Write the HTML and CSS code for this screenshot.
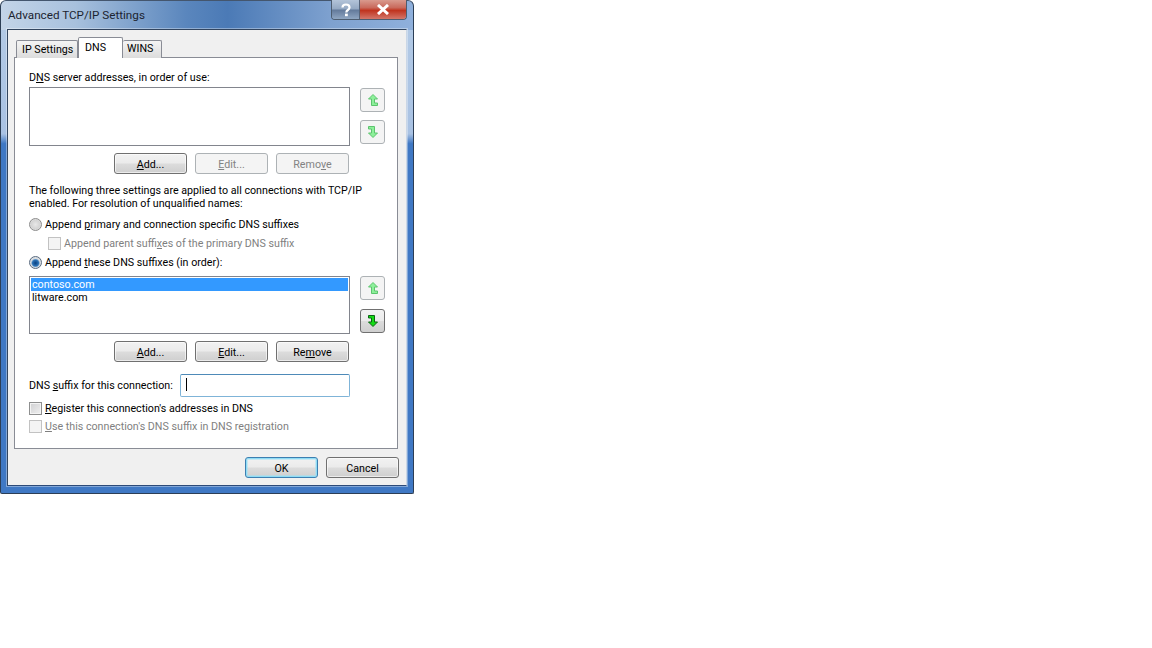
FILE: index.html
```html
<!DOCTYPE html>
<html lang="en">
<head>
<meta charset="utf-8">
<title>Advanced TCP/IP Settings</title>
<link rel="stylesheet" href="styles.css">
</head>
<body>
<div class="window">
  <header class="titlebar">
    <span class="title">Advanced TCP/IP Settings</span>
    <div class="caption">
      <div class="cap help"><svg width="12" height="14" viewBox="0 0 12 14"><path d="M2.5 4.5C2.5 2.6 4 1.5 6 1.5s3.5 1.1 3.5 3c0 2.6-3.2 2.4-3.2 5" fill="none" stroke="#fff" stroke-width="2.2"/><rect x="5" y="10.6" width="2.8" height="2.6" fill="#fff"/></svg></div>
      <div class="cap close"><svg width="14" height="11" viewBox="0 0 14 11"><path d="M2 1l10 9M12 1L2 10" fill="none" stroke="#fff" stroke-width="3"/></svg></div>
    </div>
  </header>
  <div class="client">
    <div class="tabs">
      <div class="tab first">IP Settings</div>
      <div class="tab active">DNS</div>
      <div class="tab">WINS</div>
    </div>
    <main class="pane">
      <div class="label l1">D<u>N</u>S server addresses, in order of use:</div>
      <div class="listrow r1">
        <div class="listbox"></div>
        <div class="arrows">
          <button class="arrow dis"><svg width="10" height="12" viewBox="0 0 10 12"><path d="M5 .5L9.5 5H6.5V9H9.5V11.5H3.5V5H.5Z" fill="#8df09a" stroke="#5cc46e" stroke-width="1"/></svg></button>
          <button class="arrow dis"><svg width="10" height="12" viewBox="0 0 10 12"><path d="M.5 .5H6.5V7H9.5L5 11.5L.5 7H3.5V3H.5Z" fill="#8df09a" stroke="#5cc46e" stroke-width="1"/></svg></button>
        </div>
      </div>
      <div class="btnrow b1">
        <button class="btn"><u>A</u>dd...</button>
        <button class="btn off"><u>E</u>dit...</button>
        <button class="btn off">Remo<u>v</u>e</button>
      </div>
      <p class="info">The following three settings are applied to all connections with TCP/IP<br>enabled. For resolution of unqualified names:</p>
      <div class="opt o1"><span class="radio"></span><span>Append <u>p</u>rimary and connection specific DNS suffixes</span></div>
      <div class="opt o2 grey"><span class="check faint"></span><span>Append parent suffi<u>x</u>es of the primary DNS suffix</span></div>
      <div class="opt o3"><span class="radio on"></span><span>Append <u>t</u>hese DNS suffixes (in order):</span></div>
      <div class="listrow r2">
        <div class="listbox">
          <div class="item sel">contoso.com</div>
          <div class="item">litware.com</div>
        </div>
        <div class="arrows">
          <button class="arrow dis"><svg width="10" height="12" viewBox="0 0 10 12"><path d="M5 .5L9.5 5H6.5V9H9.5V11.5H3.5V5H.5Z" fill="#8df09a" stroke="#5cc46e" stroke-width="1"/></svg></button>
          <button class="arrow live"><svg width="10" height="12" viewBox="0 0 10 12"><path d="M.5 .5H6.5V7H9.5L5 11.5L.5 7H3.5V3H.5Z" fill="#14dc14" stroke="#0c6414" stroke-width="1"/></svg></button>
        </div>
      </div>
      <div class="btnrow b2">
        <button class="btn"><u>A</u>dd...</button>
        <button class="btn"><u>E</u>dit...</button>
        <button class="btn">Re<u>m</u>ove</button>
      </div>
      <div class="suffix">
        <label>DNS <u>s</u>uffix for this connection:</label>
        <div class="input"><span class="caret"></span></div>
      </div>
      <div class="opt o4"><span class="check"></span><span><u>R</u>egister this connection's addresses in DNS</span></div>
      <div class="opt o5 grey"><span class="check faint"></span><span><u>U</u>se this connection's DNS suffix in DNS registration</span></div>
    </main>
    <footer class="footer">
      <button class="btn default">OK</button>
      <button class="btn">Cancel</button>
    </footer>
  </div>
</div>
</body>
</html>
```
FILE: styles.css
```css
* { box-sizing: border-box; }
html, body { margin: 0; padding: 0; background: #fff; }
body { font-family: "Roboto", "Lato", sans-serif; font-size: 10.7px; color: #000; height: 648px; overflow: hidden; }
u { text-underline-offset: 1px; text-decoration-thickness: 1px; }
.window {
  width: 414px; height: 494px; padding: 0 6px 7px 6px;
  border: 1px solid #2c3e55; border-top-color: #44566e; border-radius: 6px 6px 2px 2px;
  background:
    linear-gradient(90deg, #c3d4e8 0, #a8c1dd 18%, #5a86bd 45%, #4b7ab6 55%, #7ea1cf 80%, #8fb0dc 100%) top/100% 29px no-repeat,
    linear-gradient(180deg, #b4cbe6 0, #a9c2e3 27%, #3f78c4 29%, #3f78c4 100%);
  display: flex; flex-direction: column;
}
.titlebar { height: 28px; flex: none; display: flex; justify-content: space-between; margin: 0 -6px; padding-left: 7px; }
.title { font-size: 11.7px; line-height: 28px; color: #1c2430; }
.caption { display: flex; height: 20px; margin-right: 6px; margin-top: -1px; border: 1px solid #4d5d70; border-top: 0; border-radius: 0 0 4px 4px; overflow: hidden; }
.cap { display: flex; align-items: center; justify-content: center; }
.help { width: 28px; background: linear-gradient(180deg, #b3c4d9 0, #93a8c2 48%, #62799a 52%, #8fa6c2 100%); border-right: 1px solid #55647a; }
.close { width: 46px; background: linear-gradient(180deg, #d99a8e 0, #c96a5c 40%, #c0341f 55%, #d3776a 100%); }
.client { flex: 1; min-height: 0; background: #f0f0f0; border: 1px solid #32455f; border-right-color: #c9d6e6; border-bottom-color: #2d4a78; padding: 7px 8px 0 6px; box-shadow: 0 0 0 1px rgba(255,255,255,.35); }
.tabs { display: flex; height: 21px; padding-left: 2px; align-items: flex-end; position: relative; z-index: 1; margin-bottom: -1px; }
.tab { height: 18px; padding: 0 4px; line-height: 16px; border: 1px solid #898c95; border-left: 0; border-bottom: 0; background: linear-gradient(180deg, #f4f4f4, #dcdcdc); border-radius: 2px 2px 0 0; width: 39px; white-space: nowrap; }
.tab.first { width: 62px; border-left: 1px solid #898c95; padding-left: 5px; line-height: 17px; }
.tab.active { height: 21px; width: 45px; background: #fff; border-left: 1px solid #898c95; padding-left: 6px; line-height: 19px; }
.pane { height: 392px; width: 384px; background: #fff; border: 1px solid #898c95; padding: 0 14px; }
.label { line-height: 15px; margin-top: 12px; height: 15px; white-space: nowrap; }
.listrow { display: flex; gap: 10px; }
.r1 { margin-top: 2px; }
.r2 { margin-top: 6px; }
.listbox { width: 321px; height: 59px; border: 1px solid #82858d; padding: 1px; flex: none; }
.r2 .listbox { height: 58px; }
.item { height: 13px; line-height: 13px; padding-left: 1px; white-space: nowrap; }
.item.sel { background: #3399ff; color: #fff; }
.arrows { display: flex; flex-direction: column; gap: 8px; padding-top: 1px; }
.r2 .arrows { padding-top: 0; gap: 9px; }
.arrow { width: 25px; height: 24px; padding: 0; border: 1px solid #adb2b5; border-radius: 3px; background: #f4f4f4; display: flex; align-items: center; justify-content: center; flex: none; }
.arrow.live { border-color: #707070; background: linear-gradient(180deg, #f2f2f2 0, #ebebeb 48%, #dcdcdc 52%, #cfcfcf 100%); }
.btnrow { display: flex; gap: 8px; padding-left: 85px; }
.b1 { margin-top: 7px; }
.b2 { margin-top: 7px; }
.btn { width: 73px; height: 21px; padding: 1px 0 0; border: 1px solid #707070; border-radius: 3px; font: inherit; color: #000; line-height: 17px; background: linear-gradient(180deg, #f2f2f2 0, #ebebeb 48%, #dcdcdc 52%, #cfcfcf 100%); box-shadow: inset 0 0 0 1px rgba(255,255,255,.6); }
.btn.off { border-color: #adb2b5; background: #f4f4f4; color: #838383; box-shadow: none; }
.btn.default { border-color: #3c7fb1; box-shadow: inset 0 0 0 1px #8fdcf5, inset 0 0 0 2px rgba(160,225,245,.5); }
.info { margin: 10px 0 0; line-height: 13px; height: 26px; white-space: nowrap; }
.opt { display: flex; align-items: center; gap: 3px; height: 15px; white-space: nowrap; }
.grey { color: #7f7f7f; }
.o1 { margin-top: 7px; }
.o2 { margin-top: 4px; padding-left: 19px; }
.o3 { margin-top: 4px; }
.o4 { margin-top: 4px; }
.o5 { margin-top: 3px; }
.radio { width: 13px; height: 13px; flex: none; border: 1px solid #8c8c8c; border-radius: 50%; background: radial-gradient(circle at 50% 50%, #e8e8e8 0, #d4d4d4 55%, #f4f4f4 100%); }
.radio.on { background: radial-gradient(circle at 50% 55%, #0b3f7f 0, #2d74b8 38%, #d8dde2 55%, #e6e6e6 100%); border-color: #5a6b80; }
.check { width: 13px; height: 13px; flex: none; border: 1px solid #8e8f8f; background: linear-gradient(135deg, #cfd0d2, #f0f0f0); box-shadow: inset 0 0 0 1px #f4f4f4; }
.check.faint { border-color: #c2c2c2; background: #f4f4f4; box-shadow: none; }
.suffix { display: flex; align-items: center; gap: 6px; margin-top: 12px; }
.suffix label { line-height: 15px; width: 145px; white-space: nowrap; }
.input { width: 170px; height: 23px; border: 1px solid #7fb4d8; border-top-color: #4e8ab8; border-radius: 2px; padding: 3px 5px; }
.caret { display: block; width: 1px; height: 13px; background: #000; }
.footer { display: flex; gap: 8px; justify-content: flex-end; margin: 8px -1px 0 0; }
```
